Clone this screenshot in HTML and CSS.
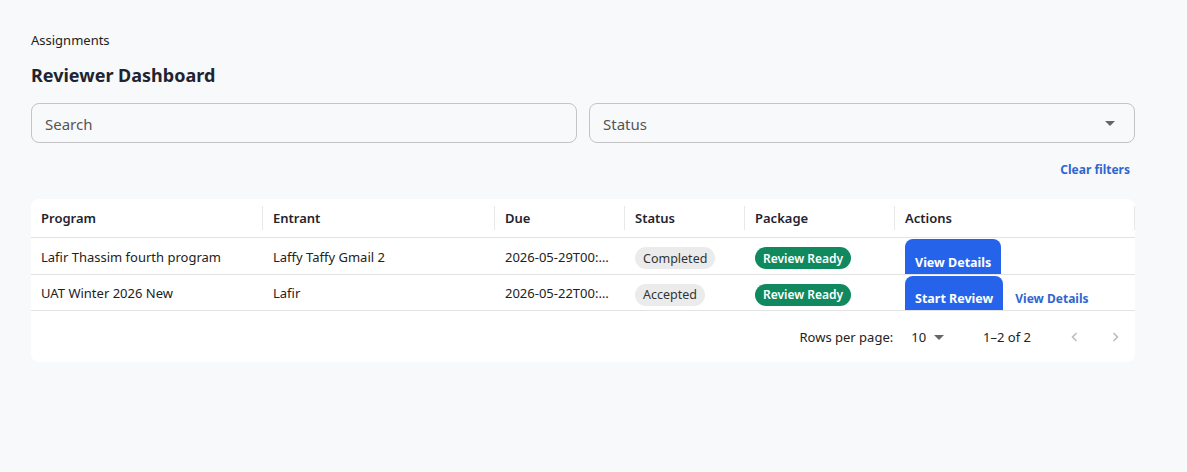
FILE: index.html
```html
<!DOCTYPE html>
<html lang="en">
<head>
<meta charset="utf-8">
<title>Reviewer Dashboard</title>
<link rel="stylesheet" href="styles.css">
</head>
<body>
<div class="page">
  <div class="crumb">Assignments</div>
  <h1 class="title">Reviewer Dashboard</h1>
  <div class="filters">
    <div class="field"><span class="placeholder">Search</span></div>
    <div class="field select"><span class="placeholder">Status</span><span class="caret"></span></div>
  </div>
  <div class="clear-row"><a class="clear">Clear filters</a></div>
  <div class="card">
    <table class="grid">
      <colgroup>
        <col class="c1"><col class="c2"><col class="c3"><col class="c4"><col class="c5"><col class="c6">
      </colgroup>
      <thead>
        <tr>
          <th>Program</th><th>Entrant</th><th>Due</th><th>Status</th><th>Package</th><th>Actions</th>
        </tr>
      </thead>
      <tbody>
        <tr>
          <td>Lafir Thassim fourth program</td>
          <td>Laffy Taffy Gmail 2</td>
          <td>2026-05-29T00:…</td>
          <td><span class="chip">Completed</span></td>
          <td><span class="chip ok">Review Ready</span></td>
          <td class="actions"><span class="btn">View Details</span></td>
        </tr>
        <tr class="last">
          <td>UAT Winter 2026 New</td>
          <td>Lafir</td>
          <td>2026-05-22T00:…</td>
          <td><span class="chip">Accepted</span></td>
          <td><span class="chip ok">Review Ready</span></td>
          <td class="actions"><span class="btn">Start Review</span><a class="link">View Details</a></td>
        </tr>
      </tbody>
    </table>
    <div class="pager">
      <span class="rpp">Rows per page:</span>
      <span class="rows">10<span class="caret small"></span></span>
      <span class="range">1–2 of 2</span>
      <span class="nav">
        <svg width="12" height="12" viewBox="0 0 12 12"><path d="M7.5 2 L3.5 6 L7.5 10" fill="none" stroke="#bdbdbd" stroke-width="1.6"/></svg>
        <svg width="12" height="12" viewBox="0 0 12 12"><path d="M4.5 2 L8.5 6 L4.5 10" fill="none" stroke="#bdbdbd" stroke-width="1.6"/></svg>
      </span>
    </div>
  </div>
</div>
</body>
</html>
```

FILE: styles.css
```css
* { box-sizing: border-box; }
html, body { margin: 0; background: #f8f9fb; }
body {
  font-family: "Noto Sans", "Open Sans", sans-serif;
  color: #222;
  font-size: 13px;
}
.page {
  width: 1104px;
  margin-left: 31px;
  padding-top: 31px;
}
.crumb {
  font-size: 13px;
  line-height: 18px;
  color: #222;
}
.title {
  margin: 13px 0 0;
  font-size: 18px;
  line-height: 26px;
  font-weight: 700;
  color: #1e2430;
}
.filters {
  display: flex;
  gap: 12px;
  margin-top: 15px;
}
.field {
  flex: 1;
  height: 40px;
  border: 1px solid #c4c4c4;
  border-radius: 8px;
  display: flex;
  align-items: center;
  padding: 1px 13px 0;
  background: #f8f9fb;
}
.placeholder { font-size: 15px; color: #555; }
.select { justify-content: space-between; }
.caret {
  width: 0; height: 0;
  border-left: 5px solid transparent;
  border-right: 5px solid transparent;
  border-top: 5px solid #666;
  margin-right: 6px;
}
.clear-row {
  display: flex;
  justify-content: flex-end;
  margin-top: 18px;
  padding-right: 5px;
}
.clear {
  font-size: 12px;
  line-height: 18px;
  font-weight: 700;
  color: #2f66d0;
}
.card {
  margin-top: 20px;
  background: #fff;
  border-radius: 8px;
  overflow: hidden;
}
.grid {
  width: 100%;
  border-collapse: collapse;
  table-layout: fixed;
}
.c1 { width: 232px; } .c2 { width: 232px; } .c3 { width: 130px; }
.c4 { width: 120px; } .c5 { width: 150px; } .c6 { width: 240px; }
th {
  position: relative;
  text-align: left;
  font-size: 13px;
  font-weight: 600;
  color: #1e2430;
  height: 38px;
  padding: 0 10px;
  border-bottom: 1px solid #e3e3e3;
}
th::after {
  content: "";
  position: absolute;
  right: 0;
  top: 7px;
  bottom: 7px;
  width: 1px;
  background: #e8e8e8;
}
td {
  height: 36px;
  padding: 2px 10px 0;
  font-size: 13px;
  color: #222;
  border-bottom: 1px solid #e3e3e3;
  white-space: nowrap;
  overflow: hidden;
  vertical-align: middle;
}
tr.last td { height: 35px; }
.chip {
  display: inline-flex;
  align-items: center;
  height: 22px;
  padding: 0 8px;
  border-radius: 11px;
  background: #ebebeb;
  color: #333;
  font-size: 12.5px;
  margin-top: 3px;
}
.chip.ok {
  background: #10895e;
  color: #fff;
  font-weight: 600;
  font-size: 12px;
}
td.actions {
  vertical-align: bottom;
  padding-top: 1px;
}
.btn {
  display: inline-flex;
  align-items: flex-end;
  height: 35px;
  padding: 0 10px 3px;
  background: #2563eb;
  color: #fff;
  font-size: 12.5px;
  font-weight: 700;
  border-radius: 8px 8px 0 0;
  vertical-align: bottom;
}
tr.last .btn { height: 34px; }
.link {
  display: inline-block;
  margin-left: 12px;
  font-size: 12px;
  font-weight: 700;
  color: #2f66d0;
  padding-bottom: 3px;
  vertical-align: bottom;
}
.pager {
  height: 51px;
  display: flex;
  align-items: center;
  justify-content: flex-end;
  font-size: 13px;
  color: #222;
  padding: 2px 14px 0 0;
}
.rows {
  display: inline-flex;
  align-items: center;
  margin-left: 18px;
}
.caret.small { margin-left: 8px; margin-right: 0; border-top-color: #666; }
.range { margin-left: 39px; }
.nav {
  display: inline-flex;
  gap: 28px;
  margin-left: 38px;
}
```
